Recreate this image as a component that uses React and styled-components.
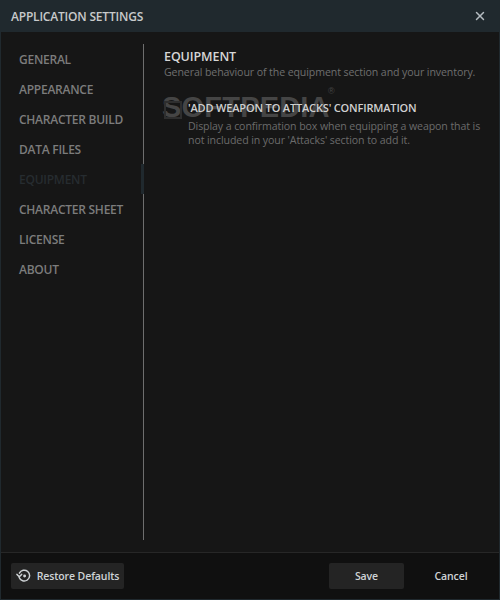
import React from "react";
import styled, { createGlobalStyle } from "styled-components";
import { X } from "lucide-react";

const Global = createGlobalStyle`
  html, body { margin: 0; padding: 0; background: #161616; }
  * { box-sizing: border-box; }
`;
const Font = `"Open Sans", "Noto Sans", sans-serif`;

const Windowed = styled.div`
  width: 500px; height: 600px; display: flex; flex-direction: column;
  background: #161616; font-family: ${Font}; border-left: 1px solid #20292e; border-right: 1px solid #20292e; border-bottom: 1px solid #20292e;
  overflow: hidden;
`;
const TitleBar = styled.div`
  height: 32px; flex: none; background: #20292e; display: flex; align-items: center; justify-content: space-between;
  padding: 0 12px 0 10px;
`;
const Title = styled.div`
  font-size: 12px; font-weight: 600; color: #c8cacb; letter-spacing: -0.2px;
`;
const CloseIcon = styled(X)`
  color: #b5bcc0; display: block;
`;
const Body = styled.div`
  flex: 1; display: flex; padding: 12px 0; min-height: 0;
`;
const Sidebar = styled.nav`
  width: 143px; flex: none; border-right: 1px solid #6e6e6e; display: flex; flex-direction: column;
`;
const NavItem = styled.div`
  height: 30px; display: flex; align-items: center; padding-left: 18px; font-size: 12px; font-weight: 600; letter-spacing: -0.25px;
  color: ${p => (p.$active ? "#262c30" : "#7c7c7c")};
  position: relative;
  ${p => p.$active && `&::after { content: ""; position: absolute; right: -1px; top: 0; width: 3px; height: 30px; background: #20292e; }`}
`;
const Content = styled.main`
  flex: 1; padding: 0 8px 0 20px; position: relative; min-width: 0;
`;
const SectionTitle = styled.h2`
  margin: 4px 0 0; font-size: 12.5px; line-height: 17px; font-weight: 600; color: #d6d6d6; letter-spacing: -0.1px;
  position: relative;
`;
const SectionDesc = styled.p`
  margin: 0; font-size: 10.6px; line-height: 14px; color: #6f6f6f; letter-spacing: -0.1px; position: relative;
`;
const Option = styled.div`
  margin-top: 18px; display: flex; gap: 6px; position: relative; align-items: flex-start;
`;
const CheckBox = styled.div`
  width: 18px; height: 18px; flex: none; margin-top: 4px; border: 2px solid #2e2e2e;
`;
const OptionText = styled.div`
  flex: 1; min-width: 0;
`;
const OptionTitle = styled.h3`
  margin: 0; font-size: 11px; line-height: 22px; font-weight: 600; color: #d0d0d0; letter-spacing: -0.17px;
`;
const OptionDesc = styled.p`
  margin: 0; font-size: 10.6px; line-height: 14px; color: #6b6b6b; letter-spacing: -0.1px;
`;
const Watermark = styled.div`
  position: absolute; left: 18px; top: 48px; font-family: "Liberation Sans", sans-serif; font-size: 29px; line-height: 30px;
  font-weight: 700; color: #454545; letter-spacing: 0.2px; pointer-events: none;
  sup { font-size: 9px; font-weight: 400; position: absolute; top: -7px; right: -5px; line-height: 12px; }
`;
const Footer = styled.footer`
  height: 47px; flex: none; background: #101010; border-top: 1px solid #272727; display: flex; align-items: center; padding: 0 0 0 10px;
`;
const Button = styled.button`
  height: 26px; border: none; border-radius: 2px; font-family: ${Font}; font-size: 10.5px; font-weight: 600; color: #cfd3d6;
  background: ${p => (p.$ghost ? "transparent" : "#242424")};
  width: ${p => p.$w}px; display: flex; align-items: center; justify-content: center; gap: 5px; padding: 0;
  margin-left: ${p => p.$ml || 0}px; letter-spacing: -0.1px;
`;
const RestoreSvg = styled.svg`
  width: 16px; height: 16px; display: block; fill: none; stroke: #cfd3d6; stroke-width: 1.5; stroke-linecap: round; stroke-linejoin: round;
`;

const items = ["GENERAL", "APPEARANCE", "CHARACTER BUILD", "DATA FILES", "EQUIPMENT", "CHARACTER SHEET", "LICENSE", "ABOUT"];

export default function App() {
  return (
    <Windowed>
      <Global />
      <TitleBar>
        <Title>APPLICATION SETTINGS</Title>
        <CloseIcon size={14} strokeWidth={2.5} />
      </TitleBar>
      <Body>
        <Sidebar>
          {items.map(t => <NavItem key={t} $active={t === "EQUIPMENT"}>{t}</NavItem>)}
        </Sidebar>
        <Content>
          <Watermark>SOFTPEDIA<sup>®</sup></Watermark>
          <SectionTitle>EQUIPMENT</SectionTitle>
          <SectionDesc>General behaviour of the equipment section and your inventory.</SectionDesc>
          <Option>
            <CheckBox />
            <OptionText>
              <OptionTitle>'ADD WEAPON TO ATTACKS' CONFIRMATION</OptionTitle>
              <OptionDesc>Display a confirmation box when equipping a weapon that is not included in your 'Attacks' section to add it.</OptionDesc>
            </OptionText>
          </Option>
        </Content>
      </Body>
      <Footer>
        <Button $w={113}>
          <RestoreSvg viewBox="0 0 16 16">
            <path d="M3.2 9.5A5.4 5.4 0 1 0 3.4 5.2" />
            <path d="M1 6.4 3.3 8.8 5.6 6.4" />
            <circle cx="8.6" cy="8" r="0.7" fill="#cfd3d6" />
          </RestoreSvg>
          Restore Defaults
        </Button>
        <Button $w={75} $ml={205}>Save</Button>
        <Button $w={94} $ghost>Cancel</Button>
      </Footer>
    </Windowed>
  );
}
